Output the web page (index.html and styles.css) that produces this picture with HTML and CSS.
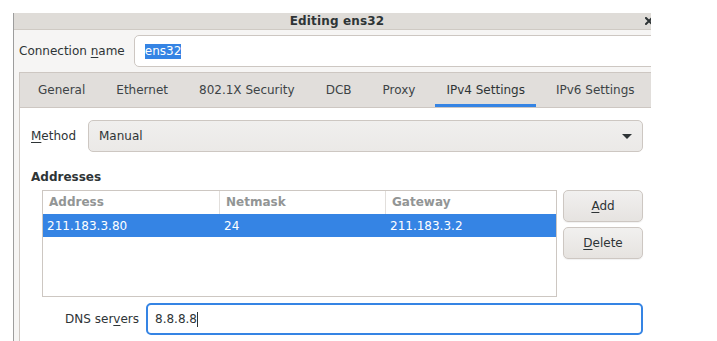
FILE: index.html
```html
<!DOCTYPE html>
<html lang="en">
<head>
    <meta charset="UTF-8">
    <title>Editing ens32</title>
    <link rel="stylesheet" href="styles.css">
</head>
<body>
    <div class="window">
        <div class="titlebar">
            <span class="title">Editing ens32</span>
            <svg class="close" width="8" height="8" viewBox="0 0 8 8">
                <path d="M1 1 L7 7 M7 1 L1 7" stroke="#2e3436" stroke-width="2" stroke-linecap="square"/>
            </svg>
        </div>
        <div class="content">
            <div class="name-row">
                <span class="label">Connection <u>n</u>ame</span>
                <div class="entry"><span class="selected-text">ens32</span></div>
            </div>
            <div class="notebook">
                <div class="tabs">
                    <span class="tab">General</span>
                    <span class="tab">Ethernet</span>
                    <span class="tab">802.1X Security</span>
                    <span class="tab">DCB</span>
                    <span class="tab">Proxy</span>
                    <span class="tab active">IPv4 Settings</span>
                    <span class="tab">IPv6 Settings</span>
                </div>
                <div class="page">
                    <div class="method-row">
                        <span class="label"><u>M</u>ethod</span>
                        <div class="combo">
                            <span>Manual</span>
                            <svg width="10" height="5" viewBox="0 0 10 5"><path d="M0 0 L10 0 L5 5 Z" fill="#2e3436"/></svg>
                        </div>
                    </div>
                    <div class="section-title">Addresses</div>
                    <div class="addr-row">
                        <div class="addr-table">
                            <div class="thead">
                                <span>Address</span>
                                <span>Netmask</span>
                                <span>Gateway</span>
                            </div>
                            <div class="trow selected">
                                <span>211.183.3.80</span>
                                <span>24</span>
                                <span>211.183.3.2</span>
                            </div>
                        </div>
                        <div class="buttons">
                            <button class="btn"><u>A</u>dd</button>
                            <button class="btn"><u>D</u>elete</button>
                        </div>
                    </div>
                    <div class="dns-row">
                        <span class="dns-label">DNS ser<u>v</u>ers</span>
                        <div class="entry focused"><span>8.8.8.8</span><span class="cursor"></span></div>
                    </div>
                </div>
            </div>
        </div>
    </div>
</body>
</html>
```
FILE: styles.css
```css
body {
    margin: 0;
    background-color: #ffffff;
    font-family: "DejaVu Sans", sans-serif;
    font-size: 12px;
    color: #2e3436;
    overflow: hidden;
}

u {
    text-decoration-thickness: 1px;
    text-underline-offset: 2px;
}

.window {
    position: relative;
    margin: 13px 0 0 13px;
    width: 638px;
    height: 328px;
    border-left: 1px solid #9d9d9d;
    box-sizing: border-box;
    overflow: hidden;
    background-color: #f6f5f4;
}

.window::before {
    content: '';
    position: absolute;
    left: -1px;
    top: 0;
    width: 1px;
    height: 4px;
    background: #3584e4;
}

.titlebar {
    height: 16px;
    background-color: #dfdcd8;
    border-bottom: 1px solid #cfcac4;
    display: flex;
    align-items: center;
}

.title {
    flex: 1;
    text-align: center;
    padding-left: 15px;
    font-weight: bold;
    line-height: 16px;
    letter-spacing: 0.15px;
}

.close {
    margin-right: -2px;
    flex-shrink: 0;
}

.content {
    padding: 5px 0 0 5px;
}

.name-row {
    display: flex;
    align-items: center;
    gap: 9px;
}

.entry {
    flex: 1;
    height: 32px;
    box-sizing: border-box;
    background-color: #ffffff;
    border: 1px solid #cdc7c2;
    border-radius: 5px;
    display: flex;
    align-items: center;
    padding-left: 10px;
}

.name-row .entry {
    margin-right: -10px;
}

.selected-text {
    background-color: #3584e4;
    color: #ffffff;
    line-height: 15px;
}

.notebook {
    margin-top: 5px;
    border-left: 1px solid #cdc7c2;
}

.tabs {
    display: flex;
    height: 36px;
    box-sizing: border-box;
    background-color: #e1dedb;
    border-top: 1px solid #cdc7c2;
    border-bottom: 1px solid #cdc7c2;
    padding-left: 2.5px;
    white-space: nowrap;
}

.tab {
    display: flex;
    align-items: center;
    padding: 0 11.5px;
    margin: 0 4px;
    height: 34px;
    box-sizing: border-box;
    color: #3d4346;
}

.tab.active {
    border-bottom: 3px solid #3584e4;
    padding-top: 3px;
    color: #2e3436;
}

.page {
    background-color: #ffffff;
    height: 240px;
    padding: 12px 8px 0 11px;
}

.method-row {
    display: flex;
    align-items: center;
    gap: 12px;
}

.combo {
    flex: 1;
    height: 32px;
    box-sizing: border-box;
    border: 1px solid #cdc7c2;
    border-radius: 5px;
    background: linear-gradient(#f0efee, #ebe9e7);
    display: flex;
    align-items: center;
    justify-content: space-between;
    padding: 0 10px 0 10px;
}

.section-title {
    font-weight: bold;
    margin-top: 18px;
    line-height: 15px;
}

.addr-row {
    display: flex;
    gap: 6px;
    margin: 5px 0 0 11px;
}

.addr-table {
    width: 515px;
    height: 107px;
    box-sizing: border-box;
    border: 1px solid #cdc7c2;
    background-color: #ffffff;
}

.thead,
.trow {
    display: grid;
    grid-template-columns: 177px 166px 1fr;
    height: 23px;
    align-items: center;
}

.thead span {
    height: 23px;
    line-height: 23px;
    padding-left: 6px;
    color: #929595;
    font-weight: bold;
    border-right: 1px solid #e2dfdc;
}

.thead span:last-child {
    border-right: none;
}

.trow span {
    padding-left: 4px;
}

.trow.selected {
    background-color: #3584e4;
    color: #ffffff;
}

.buttons {
    display: flex;
    flex-direction: column;
    gap: 5px;
}

.btn {
    width: 80px;
    height: 32px;
    font-family: "DejaVu Sans", sans-serif;
    font-size: 12px;
    color: #2e3436;
    border: 1px solid #cdc7c2;
    border-radius: 5px;
    background: linear-gradient(#f1f0ef, #e6e3e0);
    box-shadow: 0 1px 1px rgba(0, 0, 0, 0.06);
    padding: 0;
}

.dns-row {
    display: flex;
    align-items: center;
    gap: 7px;
    margin: 6px 0 0 11px;
}

.dns-label {
    width: 97px;
    text-align: right;
}

.entry.focused {
    border: 2px solid #3584e4;
    padding-left: 7px;
    height: 32px;
}

.cursor {
    width: 1px;
    height: 15px;
    background-color: #2e3436;
}
```
